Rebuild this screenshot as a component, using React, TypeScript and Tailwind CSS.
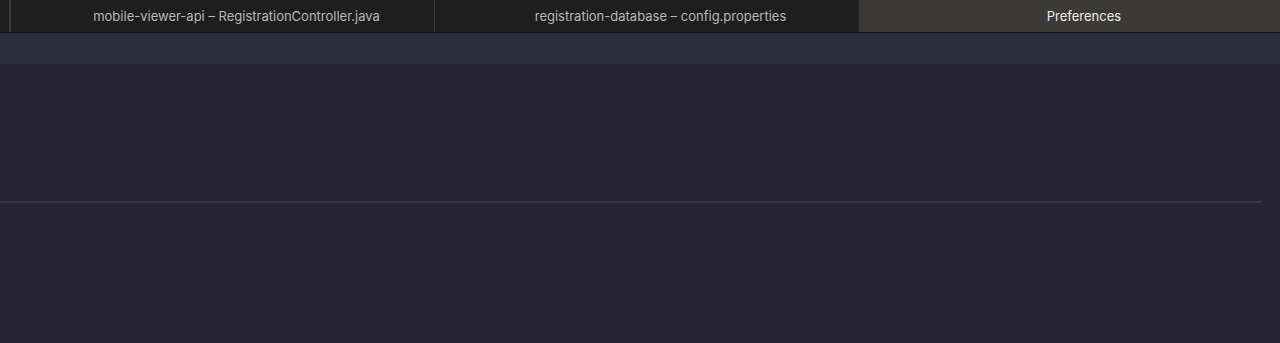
export default function App() {
  const font = { fontFamily: '"Inter", "Liberation Sans", sans-serif' };
  return (
    <div className="w-[1280px] h-[343px] bg-[#262433] flex flex-col overflow-hidden" style={font}>
      <div className="h-[33px] flex bg-[#1e1e1e] border-b border-[#141414]">
        <div className="w-[9px] shrink-0" />
        <div className="w-[2px] shrink-0 bg-[#3a3a3a]" />
        <div className="w-[423px] shrink-0 flex items-center justify-center pl-[28px] pt-[2px] text-[13px] text-[#b8b8b8]">
          mobile-viewer-api – RegistrationController.java
        </div>
        <div className="w-[1px] shrink-0 bg-[#3a3a3a]" />
        <div className="w-[423px] shrink-0 flex items-center justify-center pl-[28px] pt-[2px] text-[13px] text-[#b8b8b8]">
          registration-database – config.properties
        </div>
        <div className="w-[1px] shrink-0 bg-[#2a2a2a]" />
        <div className="flex-1 flex items-center justify-center pl-[29px] pt-[2px] text-[13px] text-[#ececec] bg-[#3c3a37]">
          Preferences
        </div>
      </div>
      <div className="h-[31px] bg-[#2d2b3e]" />
      <div className="h-[137px]" />
      <div className="w-[1262px] h-[2px] bg-[#363446]" />
    </div>
  );
}
